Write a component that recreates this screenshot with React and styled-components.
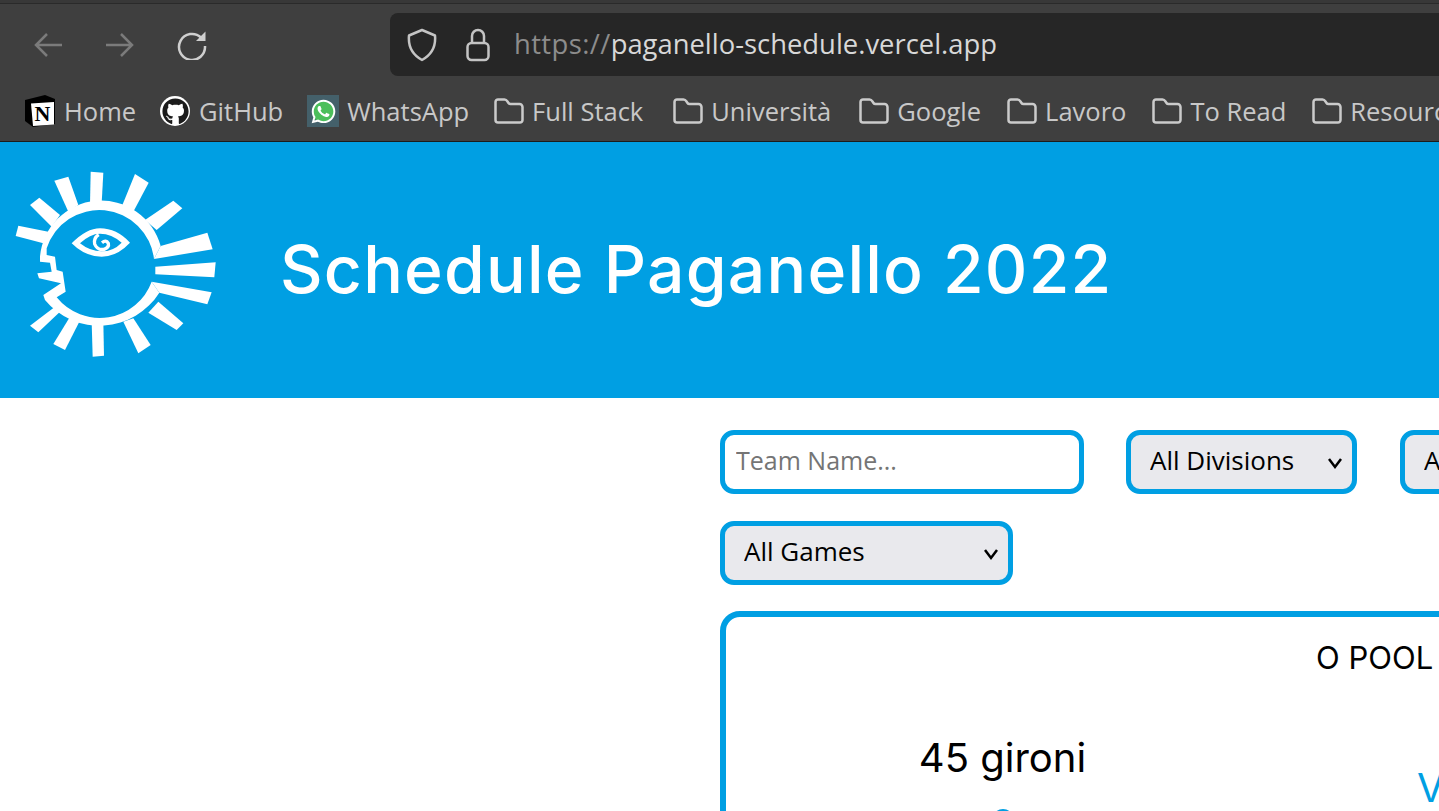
import React from 'react';
import styled, { createGlobalStyle } from 'styled-components';
import { FaGithub, FaWhatsapp } from 'react-icons/fa';

const BLUE = '#009fe3';

const GlobalStyle = createGlobalStyle`
  html, body {
    margin: 0;
    height: 100%;
    overflow: hidden;
    background: #fff;
  }
`;

const Page = styled.div`
  width: 1439px;
  height: 811px;
  overflow: hidden;
  font-family: "Open Sans", "Noto Sans", sans-serif;
`;

const Chrome = styled.div`
  height: 142px;
  box-sizing: border-box;
  background: #3f3f3f;
  border-bottom: 1px solid #1c1c1c;
  overflow: hidden;
`;

const TopEdge = styled.div`
  height: 3px;
  background: #383838;
  border-bottom: 1px solid #2a2a2a;
`;

const Toolbar = styled.div`
  display: flex;
  align-items: center;
  height: 81px;
  padding: 0 0 0 26px;
`;

const NavButton = styled.button`
  width: 44px;
  height: 44px;
  margin-right: 28px;
  padding: 0;
  border: 0;
  background: none;
  display: flex;
  align-items: center;
  justify-content: center;
  color: ${p => (p.$off ? '#7b7b7b' : '#cfcfcf')};
`;

const UrlBar = styled.div`
  flex: 1;
  height: 63px;
  margin: 0 -20px 0 148px;
  padding-left: 17px;
  box-sizing: border-box;
  display: flex;
  align-items: center;
  background: #262626;
  border-radius: 8px 0 0 8px;
  color: #c4c4c4;
`;

const UrlIcon = styled.span`
  display: flex;
  margin-right: ${p => p.$gap}px;
`;

const Url = styled.div`
  font-size: 27.4px;
  padding-bottom: 2px;
  white-space: nowrap;
  color: #d8d8d8;
`;

const Scheme = styled.span`
  color: #8c8c8c;
  letter-spacing: 0.4px;
`;

const Bookmarks = styled.div`
  display: flex;
  align-items: center;
  height: 52px;
  padding-left: 24px;
  white-space: nowrap;
`;

const Bookmark = styled.div`
  display: flex;
  flex: none;
  align-items: center;
  gap: 8px;
  margin-right: ${p => p.$mr}px;
  font-size: 25.5px;
  color: #c8c8c8;
`;

const Header = styled.header`
  display: flex;
  align-items: flex-start;
  height: 256px;
  padding-top: 18px;
  box-sizing: border-box;
  background: ${BLUE};
`;

const Logo = styled.svg`
  flex: none;
  width: 230px;
  height: 210px;
`;

const Title = styled.h1`
  margin: 0 0 20px 50px;
  align-self: center;
  font: 500 66px "Inter", sans-serif;
  letter-spacing: 1.22px;
  color: #fff;
  white-space: nowrap;
`;

const Main = styled.main`
  padding: 32px 0 0 720px;
`;

const Filters = styled.div`
  display: flex;
  align-items: center;
  white-space: nowrap;
  margin-bottom: ${p => p.$mb}px;
`;

const field = `
  box-sizing: border-box;
  height: 64px;
  border: 5px solid ${BLUE};
  border-radius: 14px;
  outline: none;
`;

const TeamInput = styled.input`
  ${field}
  flex: none;
  width: 364px;
  margin-right: 42px;
  padding: 0 11px 4px;
  font: 400 25px "Open Sans", "Noto Sans", sans-serif;
  color: #000;
  background: #fff;
  &::placeholder {
    color: #757575;
    opacity: 1;
  }
`;

const SelectWrap = styled.div`
  position: relative;
  flex: none;
  width: ${p => p.$w}px;
  margin-right: ${p => p.$mr}px;
`;

const Select = styled.select`
  ${field}
  appearance: none;
  width: 100%;
  padding: 0 19px 4px;
  font: 400 26px "Open Sans", "Noto Sans", sans-serif;
  color: #000;
  background: #e9e9ed;
`;

const Chevron = styled.svg`
  position: absolute;
  right: 14px;
  top: 26px;
  width: 16px;
  height: 14px;
  pointer-events: none;
`;

const Card = styled.section`
  box-sizing: border-box;
  width: 1200px;
  height: 400px;
  border: 6px solid ${BLUE};
  border-radius: 20px;
  background: #fff;
`;

const PoolTitle = styled.div`
  padding: 22px 0 0 590px;
  font: 400 31px "Inter", sans-serif;
  color: #000;
  white-space: nowrap;
`;

const Columns = styled.div`
  display: flex;
  align-items: flex-start;
  margin-top: 57px;
`;

const PoolCount = styled.div`
  width: 553px;
  text-align: center;
  font: 400 40px "Inter", sans-serif;
  color: #000;
`;

const Dot = styled.div`
  width: 22px;
  height: 22px;
  margin: 27px auto 0;
  border-radius: 50%;
  background: ${BLUE};
`;

const Link = styled.div`
  margin: 30px 0 0 138px;
  font: 400 40px "Inter", sans-serif;
  color: ${BLUE};
`;

const ArrowLeft = () => (
  <svg width="30" height="26" viewBox="0 0 30 26" fill="none" stroke="currentColor" strokeWidth="2.5">
    <path d="M29 13H3M14 2 3 13l11 11" />
  </svg>
);

const ArrowRight = () => (
  <svg width="30" height="26" viewBox="0 0 30 26" fill="none" stroke="currentColor" strokeWidth="2.5">
    <path d="M1 13h26M16 2l11 11-11 11" />
  </svg>
);

const Reload = () => (
  <svg width="30" height="30" viewBox="0 0 30 30" fill="none">
    <path d="M24 7.500A13 13 0 1 0 28 16" stroke="currentColor" strokeWidth="2.5" />
    <path d="M28.500 1.500V11H19z" fill="currentColor" />
  </svg>
);

const Shield = () => (
  <svg width="30" height="34" viewBox="0 0 30 34" fill="none" stroke="currentColor" strokeWidth="2.5" strokeLinejoin="round">
    <path d="M15 2 28 7.500c1 11-3 19-13 24.500C5 26.500 1 18.500 2 7.500z" />
  </svg>
);

const Lock = () => (
  <svg width="24" height="34" viewBox="0 0 24 34" fill="none" stroke="currentColor" strokeWidth="2.5">
    <rect x="1.500" y="15" width="21" height="17" rx="4" />
    <path d="M6 15V8a6 6 0 0 1 12 0V15" />
  </svg>
);

const Folder = () => (
  <svg width="30" height="26" viewBox="0 0 30 26" fill="none" stroke="#cbcbcb" strokeWidth="2.5" strokeLinejoin="round">
    <path d="M1.500 22V4a2.500 2.500 0 0 1 2.500-2.500h6.500c1.500 0 2 .5 3 2l1 1.500c.5.8 1 1 2 1h9a3 3 0 0 1 3 3V22a2.500 2.500 0 0 1-2.500 2.500H4A2.500 2.500 0 0 1 1.500 22z" />
  </svg>
);

const NotionIcon = () => (
  <svg width="32" height="34" viewBox="0 0 32 34">
    <path d="M1 6 21 1l10 4v25L9 33 1 27z" fill="#000" />
    <path d="M7 9.500 30 8v22.500L9 32z" fill="#fff" />
    <text x="18.500" y="27" textAnchor="middle" fontFamily="Liberation Serif, serif" fontWeight="700" fontSize="22" fill="#000">N</text>
  </svg>
);

const GithubIcon = styled.span`
  display: flex;
  align-items: center;
  justify-content: center;
  width: 30px;
  height: 30px;
  margin-right: 1px;
  border-radius: 50%;
  background: #fff;
  color: #1b1b1b;
`;

const WhatsappIcon = styled.span`
  display: flex;
  align-items: center;
  justify-content: center;
  width: 32px;
  height: 32px;
  background: #44606a;
  color: #fff;
`;

const WhatsappBubble = styled.span`
  display: flex;
  border-radius: 50%;
  background: radial-gradient(circle, #4cbf5b 11px, transparent 11.5px);
`;

const SunLogo = () => (
  <Logo viewBox="0 0 690 630">
    <g fill="#fff">
      <path d="M272 35 310 38 305 130 270 135z" />
      <path d="M405 42 446 68 400 155 365 140z" />
      <path d="M520 122 547 145 470 210 435 180z" />
      <path d="M482 258 622 218 638 268 462 297z" />
      <path d="M466 320 647 307 643 352 466 343z" />
      <path d="M455 365 635 397 622 433 478 398z" />
      <path d="M475 425 550 490 530 510 445 458z" />
      <path d="M400 475 452 555 415 580 370 485z" />
      <path d="M275 485 310 485 312 587 278 590z" />
      <path d="M210 470 238 485 195 570 160 552z" />
      <path d="M165 440 180 455 115 517 90 497z" />
      <path d="M55 197 145 215 130 250 47 228z" />
      <path d="M118 113 180 165 155 200 90 135z" />
      <path d="M163 62 205 50 235 135 205 155z" />
      <path d="M120 290A184.600 184.600 0 0 1 482 258L462 297A165.500 165.500 0 0 0 140 265L140 285 165 290 170 330 188 335 197 395 170 412A166 166 0 0 0 455 365L478 398A212 212 0 0 1 135 420L130 405 183 370 117 355 112 340 155 335 150 308 120 305z" />
      <path fillRule="evenodd" d="M215 250Q260 205 300 205 350 205 390 248 350 290 305 290 255 290 215 250zM240 250Q270 274 305 274 340 274 365 248 335 221 300 221 270 221 240 250z" />
    </g>
    <path d="M296 224Q280 235 284 252 292 272 312 268 328 262 325 250 318 238 306 248" fill="none" stroke="#fff" strokeWidth="10" />
  </Logo>
);

const folders = [
  { name: 'Full Stack', mr: 30 },
  { name: 'Università', mr: 28 },
  { name: 'Google', mr: 26 },
  { name: 'Lavoro', mr: 26 },
  { name: 'To Read', mr: 26 },
  { name: 'Resources', mr: 26 },
];

export default function App() {
  return (
    <Page>
      <GlobalStyle />
      <Chrome>
        <TopEdge />
        <Toolbar>
          <NavButton $off><ArrowLeft /></NavButton>
          <NavButton $off><ArrowRight /></NavButton>
          <NavButton><Reload /></NavButton>
          <UrlBar>
            <UrlIcon $gap={29}><Shield /></UrlIcon>
            <UrlIcon $gap={24}><Lock /></UrlIcon>
            <Url><Scheme>https://</Scheme>paganello-schedule.vercel.app</Url>
          </UrlBar>
        </Toolbar>
        <Bookmarks>
          <Bookmark $mr={24}><NotionIcon />Home</Bookmark>
          <Bookmark $mr={24}><GithubIcon><FaGithub size={27} /></GithubIcon>GitHub</Bookmark>
          <Bookmark $mr={25}><WhatsappIcon><WhatsappBubble><FaWhatsapp size={27} /></WhatsappBubble></WhatsappIcon>WhatsApp</Bookmark>
          {folders.map(f => (
            <Bookmark key={f.name} $mr={f.mr}><Folder />{f.name}</Bookmark>
          ))}
        </Bookmarks>
      </Chrome>
      <Header>
        <SunLogo />
        <Title>Schedule Paganello 2022</Title>
      </Header>
      <Main>
        <Filters $mb={27}>
          <TeamInput placeholder="Team Name..." />
          <SelectWrap $w={231} $mr={43}>
            <Select defaultValue="all"><option value="all">All Divisions</option></Select>
            <Chevron viewBox="0 0 16 14" fill="none" stroke="#000" strokeWidth="2.5"><path d="M2 3l6 8 6-8" /></Chevron>
          </SelectWrap>
          <SelectWrap $w={231} $mr={0}>
            <Select defaultValue="all"><option value="all">All Days</option></Select>
          </SelectWrap>
        </Filters>
        <Filters $mb={26}>
          <SelectWrap $w={293} $mr={0}>
            <Select defaultValue="all"><option value="all">All Games</option></Select>
            <Chevron viewBox="0 0 16 14" fill="none" stroke="#000" strokeWidth="2.5"><path d="M2 3l6 8 6-8" /></Chevron>
          </SelectWrap>
        </Filters>
        <Card>
          <PoolTitle>O POOL</PoolTitle>
          <Columns>
            <PoolCount>45 gironi<Dot /></PoolCount>
            <Link>Vedi</Link>
          </Columns>
        </Card>
      </Main>
    </Page>
  );
}
